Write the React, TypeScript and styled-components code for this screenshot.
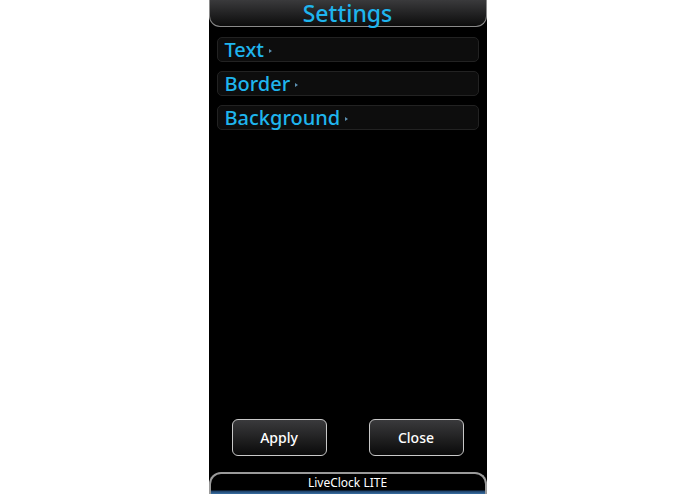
import React from "react";
import styled, { createGlobalStyle } from "styled-components";

const GlobalStyle = createGlobalStyle`
  html, body {
    margin: 0;
    padding: 0;
    background: #ffffff;
  }
  body {
    font-family: "Noto Sans", "Open Sans", sans-serif;
  }
`;

const Screen = styled.div`
  width: 278px;
  height: 494px;
  margin: 0 auto;
  background: #000;
  display: flex;
  flex-direction: column;
  overflow: hidden;
`;

const Header = styled.div`
  height: 27px;
  box-sizing: border-box;
  background: linear-gradient(#3a3a3c, #0c0c0c);
  border: 1px solid #8a8a8a;
  border-top: none;
  border-radius: 0 0 11px 11px;
  display: flex;
  align-items: center;
  justify-content: center;
`;

const Title = styled.h1`
  margin: 0;
  font-size: 23px;
  font-weight: 500;
  line-height: 26px;
  color: #1fb5ee;
`;

const Menu = styled.div`
  padding: 10px 8px 0;
  display: flex;
  flex-direction: column;
  gap: 9px;
  flex: 1;
`;

const Row = styled.div`
  height: 25px;
  box-sizing: border-box;
  background: #0d0d0d;
  border: 1px solid #222;
  border-radius: 5px;
  display: flex;
  align-items: center;
  padding-left: 7px;
  gap: 5px;
`;

const RowLabel = styled.span`
  font-size: 20px;
  font-weight: 500;
  color: #1fb5ee;
  line-height: 1;
`;

const Arrow = styled.span`
  width: 0;
  height: 0;
  border-top: 2.5px solid transparent;
  border-bottom: 2.5px solid transparent;
  border-left: 3px solid #5c8fb0;
  margin-top: 2px;
`;

const Buttons = styled.div`
  display: flex;
  justify-content: center;
  gap: 42px;
  padding-bottom: 16px;
`;

const Button = styled.button`
  width: 95px;
  height: 37px;
  box-sizing: border-box;
  border: 1px solid #c8c8c8;
  border-radius: 6px;
  background: linear-gradient(#3a3a3c, #0a0a0a);
  color: #fff;
  font-family: "Noto Sans", "Open Sans", sans-serif;
  font-size: 14px;
  font-weight: 500;
  padding: 0;
`;

const Footer = styled.div`
  height: 22px;
  box-sizing: border-box;
  border: 2px solid #9a9a9a;
  border-bottom: none;
  border-radius: 12px 12px 0 0;
  background: linear-gradient(#000 0, #000 16px, #1c3f66 17px, #3a6fa3 20px);
  display: flex;
  justify-content: center;
  padding-top: 2px;
`;

const FooterText = styled.span`
  font-size: 12px;
  color: #fff;
  line-height: 1.1;
`;

const items = ["Text", "Border", "Background"];

export default function App() {
  return (
    <>
      <GlobalStyle />
      <Screen>
        <Header>
          <Title>Settings</Title>
        </Header>
        <Menu>
          {items.map((label) => (
            <Row key={label}>
              <RowLabel>{label}</RowLabel>
              <Arrow />
            </Row>
          ))}
        </Menu>
        <Buttons>
          <Button>Apply</Button>
          <Button>Close</Button>
        </Buttons>
        <Footer>
          <FooterText>LiveClock LITE</FooterText>
        </Footer>
      </Screen>
    </>
  );
}
